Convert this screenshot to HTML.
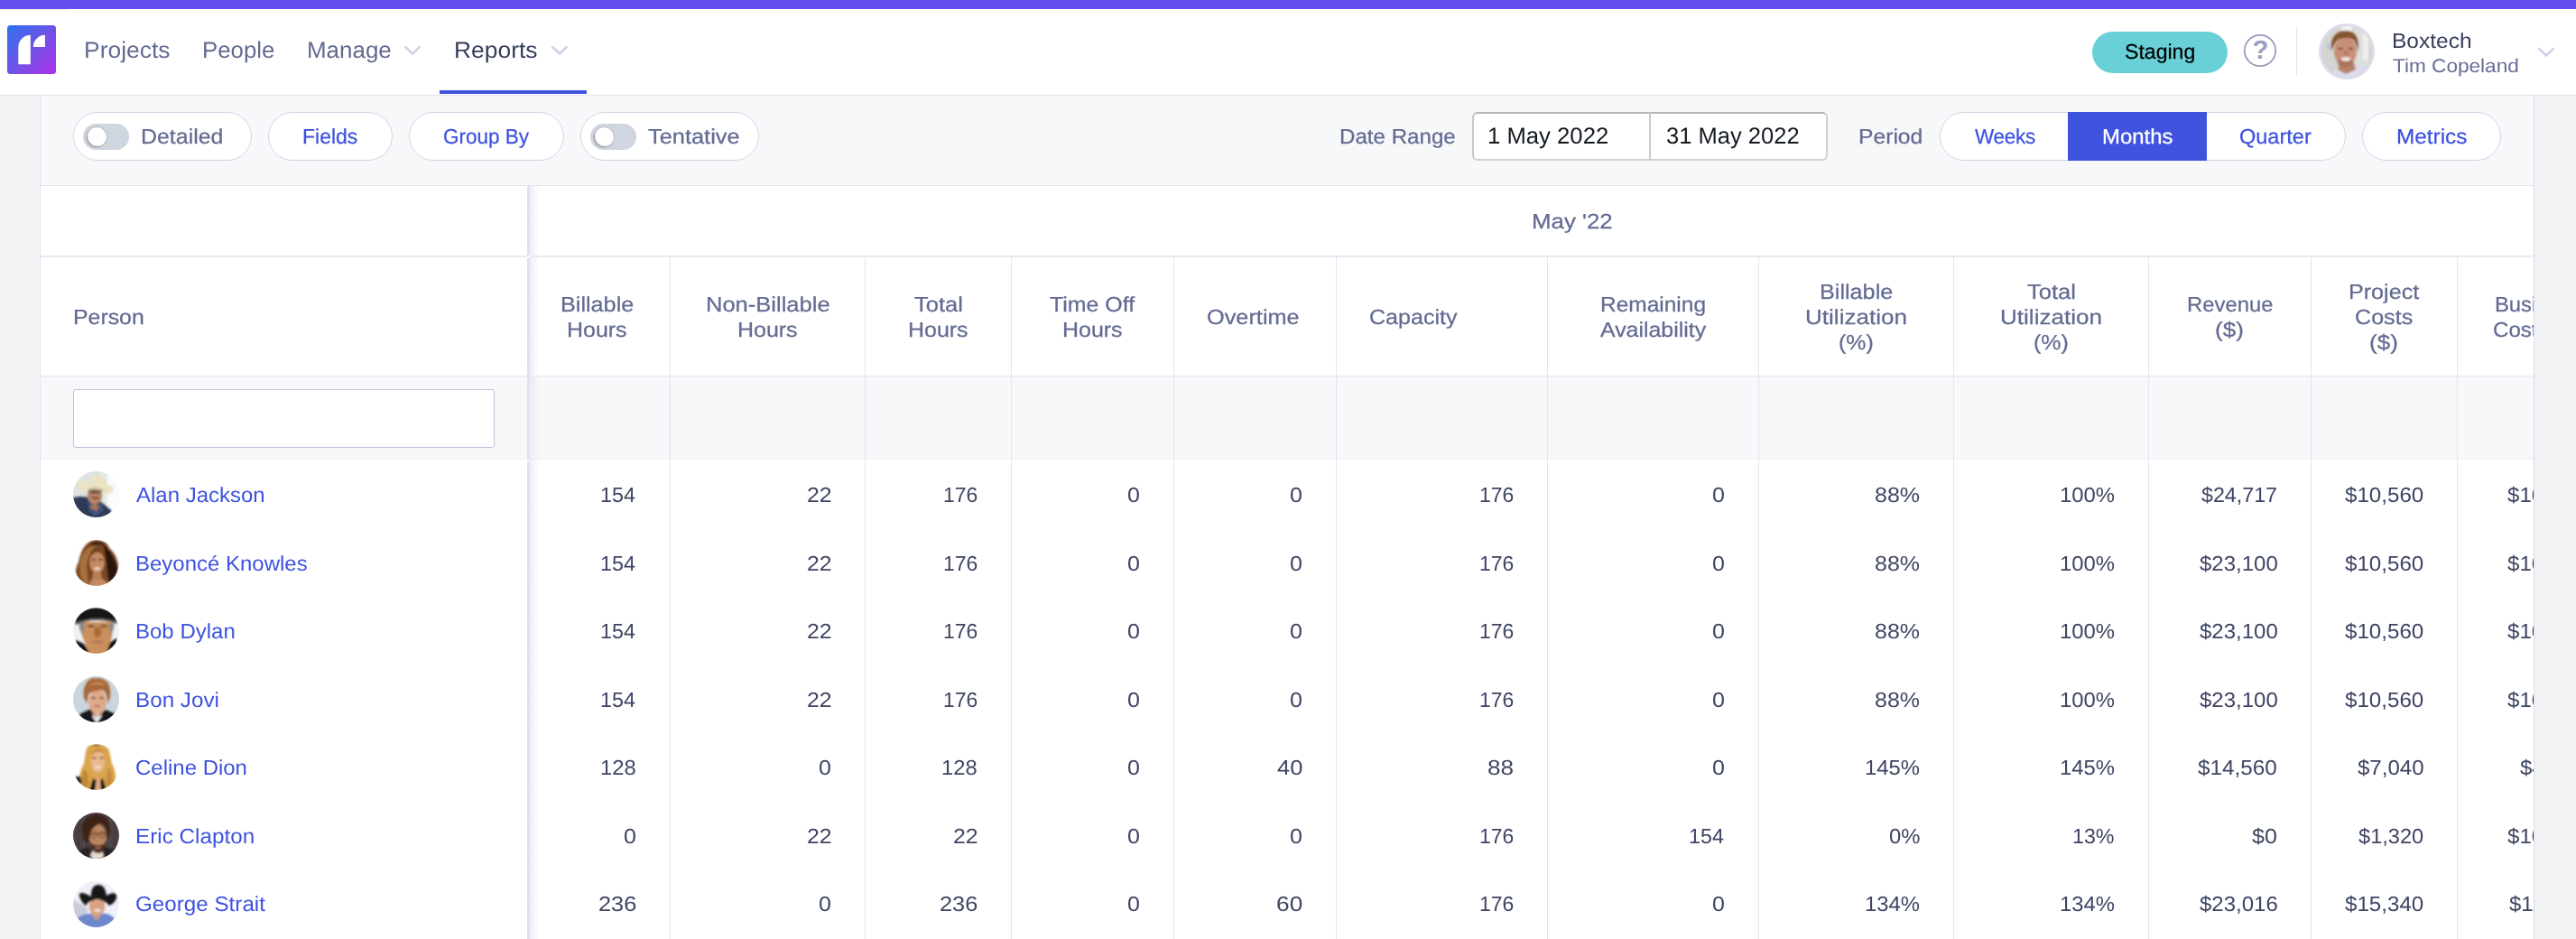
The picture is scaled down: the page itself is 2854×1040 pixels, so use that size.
<!DOCTYPE html>
<html lang="en">
<head>
<meta charset="utf-8">
<title>Reports</title>
<style>
*{box-sizing:border-box;margin:0;padding:0}
html,body{width:2854px;height:1040px;overflow:hidden;background:#f1f2f4;font-family:"Liberation Sans",sans-serif}
body{position:relative}
.abs{position:absolute}
.t{position:absolute;white-space:nowrap;line-height:1;display:block;transform-origin:0 0;text-rendering:geometricPrecision}
#topbar{left:0;top:0;width:2854px;height:10px;background:#654ff0}
#header{left:0;top:10px;width:2854px;height:96px;background:#fff;border-bottom:1px solid #e2e3ee}
#logo{left:8px;top:28px;width:54px;height:54px}
#repline{left:487px;top:100px;width:163px;height:4px;background:#4053de}
#staging{left:2318px;top:35px;width:150px;height:46px;border-radius:23px;background:#68d0d6}
#hsep{left:2544px;top:30px;width:1px;height:54px;background:#e4e5f0}
#uav{left:2569px;top:26px;width:62px;height:62px;border-radius:50%;background:#dcdcec}
#panel{left:44px;top:106px;width:2764px;height:934px;background:#fff;border-left:1px solid #e3e4ee;border-right:1px solid #dfe0ea}
#toolbar{left:45px;top:106px;width:2762px;height:100px;background:#f7f8fa;border-bottom:1px solid #e2e3ee}
.pill{position:absolute;top:124px;height:54px;border-radius:27px;background:#fff;border:1px solid #d3d5e6}
.track{position:absolute;top:137px;width:50.5px;height:29px;border-radius:15px;background:#cfd6df}
.knob{position:absolute;top:139.7px;width:24.6px;height:24.6px;border-radius:50%;background:#fff;border:1px solid rgba(125,133,138,.55);box-shadow:inset 1px -1px 1px rgba(100,108,112,.7)}
#dates{left:1631px;top:124px;width:394px;height:54px;background:#fff;border:2px solid #cfd0d3;border-top-color:#b6b7ba;border-left-color:#c6c7ca;border-radius:6px}
#datesep{left:1827px;top:125px;width:2px;height:52px;background:#c9cbcf}
#months{left:2291px;top:124px;width:154px;height:54px;background:#4053de}
.hl{position:absolute;left:45px;width:2762px;height:2px;background:#e8e9f2}
#filterrow{left:45px;top:416px;width:2762px;height:93px;background:#f7f8fa;border-top:1px solid #e6e7f0;border-bottom:1px solid #ecedf3}
#finput{left:81px;top:431px;width:467px;height:65px;background:#fff;border:1.5px solid #bfc2da;border-radius:3px}
.vl{position:absolute;top:285px;width:1px;height:755px;background:#e4e5ef}
#fixsep{left:584px;top:206px;width:3px;height:834px;background:linear-gradient(90deg,#dfe0ee 0,#dfe0ee 60%,#e8e9f3 100%)}
#fixshadow{left:587px;top:206px;width:10px;height:834px;background:linear-gradient(90deg,rgba(230,231,243,.75),rgba(240,240,248,0))}
.av{position:absolute;left:81px;width:51px;height:51px}
</style>
</head>
<body>
<div id="topbar" class="abs"></div>
<div id="header" class="abs"></div>
<div class="abs" style="left:0;top:10px;width:76px;height:1px;background:#ebecf0"></div>
<svg id="logo" class="abs" viewBox="0 0 54 54"><defs><linearGradient id="lg" x1="0" y1="0" x2="1" y2="1"><stop offset="0" stop-color="#2b72ee"/><stop offset=".5" stop-color="#6f52e6"/><stop offset="1" stop-color="#ad31e8"/></linearGradient></defs>
<rect width="54" height="54" rx="3.5" fill="url(#lg)"/>
<path d="M12.3 43.3V24.3A13.5 13.5 0 0 1 25.8 10.8V43.3Z" fill="#fff"/>
<path d="M28.8 23.9A13.1 13.1 0 0 1 41.9 10.8V23.9Z" fill="#fff"/>
</svg>
<svg class="abs" style="left:446px;top:48px" width="22" height="15" viewBox="0 0 22 15"><path d="M2.5 3.5L11 11.5L19.5 3.5" fill="none" stroke="#cfd2e4" stroke-width="2.6"/></svg>
<svg class="abs" style="left:609px;top:48px" width="22" height="15" viewBox="0 0 22 15"><path d="M2.5 3.5L11 11.5L19.5 3.5" fill="none" stroke="#cfd2e4" stroke-width="2.6"/></svg>
<div id="repline" class="abs"></div>
<div id="staging" class="abs"></div>
<svg class="abs" style="left:2485px;top:37px" width="38" height="38" viewBox="0 0 38 38"><circle cx="19" cy="19" r="17.2" fill="none" stroke="#9a9cbe" stroke-width="1.8"/></svg>
<span class="t" style="left:2495.6px;top:41.5px;font-size:29px;font-weight:700;color:#9c9ec2">?</span>
<div id="hsep" class="abs"></div>
<div id="uav" class="abs"></div>
<svg class="abs" style="left:2572px;top:29px" width="56" height="56" viewBox="0 0 56 56"><defs><clipPath id="cu"><circle cx="28" cy="28" r="28"/></clipPath><filter id="bl" x="-20%" y="-20%" width="140%" height="140%"><feGaussianBlur stdDeviation="1"/></filter></defs>
<g clip-path="url(#cu)"><rect width="56" height="56" fill="#d4d4d2"/><g filter="url(#bl)"><rect x="22" y="-2" width="12" height="10" fill="#f2f2f0"/><rect x="36" y="4" width="16" height="40" fill="#dededc"/><rect x="46" y="8" width="6" height="30" fill="#efefed"/><rect x="6" y="18" width="4" height="8" fill="#bfc8d8"/>
<path d="M10 58C12 48 18 45 24 46L34 44C44 40 52 42 58 48V58Z" fill="#dcdbea"/><path d="M20 40L36 40L38 48L27 53L18 48Z" fill="#b98268"/>
<ellipse cx="26.5" cy="28" rx="12.5" ry="16" fill="#c88f76"/><ellipse cx="26.5" cy="40" rx="8.5" ry="5" fill="#a8735c"/>
<path d="M11 27C9 12 17 5 27 5C37 5 43 12 40.5 28C39 21 37 16 34 14C28 12 22 13 18 15C15 18 13.5 22 11 27Z" fill="#85552f"/>
<ellipse cx="27" cy="36.5" rx="5.5" ry="2.2" fill="#f6ecea"/><ellipse cx="21" cy="25" rx="2.6" ry="1.1" fill="#5a3a2a"/><ellipse cx="32.500" cy="25" rx="2.6" ry="1.1" fill="#5a3a2a"/><ellipse cx="27" cy="30" rx="2.2" ry="3" fill="#b27a62"/></g></g></svg>
<svg class="abs" style="left:2810px;top:50px" width="22" height="15" viewBox="0 0 22 15"><path d="M2.5 3.5L11 11.5L19.5 3.5" fill="none" stroke="#cfd2e4" stroke-width="2.6"/></svg>

<div id="panel" class="abs"></div>
<div id="toolbar" class="abs"></div>
<div class="pill" style="left:81px;width:198px"></div><div class="track" style="left:92px"></div><div class="knob" style="left:94.5px"></div>
<div class="pill" style="left:297px;width:138px"></div>
<div class="pill" style="left:453px;width:172px"></div>
<div class="pill" style="left:643px;width:198px"></div><div class="track" style="left:654px"></div><div class="knob" style="left:656.5px"></div>
<div id="dates" class="abs"></div><div id="datesep" class="abs"></div>
<div class="pill" style="left:2149px;width:450px"></div><div id="months" class="abs"></div>
<div class="pill" style="left:2617px;width:154px"></div>

<div class="hl" style="top:283px"></div>
<div id="filterrow" class="abs"></div>
<div class="vl" style="left:742px"></div>
<div class="vl" style="left:958px"></div>
<div class="vl" style="left:1120px"></div>
<div class="vl" style="left:1300px"></div>
<div class="vl" style="left:1480px"></div>
<div class="vl" style="left:1714px"></div>
<div class="vl" style="left:1948px"></div>
<div class="vl" style="left:2164px"></div>
<div class="vl" style="left:2380px"></div>
<div class="vl" style="left:2560px"></div>
<div class="vl" style="left:2722px"></div>
<div class="abs" style="left:587px;top:206px;width:2220px;height:77px;background:#fff"></div>
<div id="fixshadow" class="abs"></div>
<div id="fixsep" class="abs"></div>
<div class="abs" style="left:584px;top:283px;width:3px;height:2px;background:#fff"></div>
<div class="abs" style="left:584px;top:509px;width:3px;height:2px;background:#fff;opacity:.7"></div>
<div id="finput" class="abs"></div>
<svg width="0" height="0" style="position:absolute"><defs><clipPath id="ca"><circle cx="25.5" cy="25.5" r="25.5"/></clipPath><filter id="b1" x="-30%" y="-30%" width="160%" height="160%"><feGaussianBlur stdDeviation="0.9"/></filter><filter id="b2" x="-30%" y="-30%" width="160%" height="160%"><feGaussianBlur stdDeviation="1.6"/></filter></defs></svg>
<svg class="av" style="top:522.20px" viewBox="0 0 51 51"><g clip-path="url(#ca)"><rect width="51" height="51" fill="#dde3de"/><rect x="37" y="0" width="14" height="51" fill="#fbfbfc"/><rect x="30" y="0" width="8" height="36" fill="#e6ebe6"/>
<g filter="url(#b1)"><path d="M-2 30C6 27 14 28 20 30L30 33L42 43L46 55H-2Z" fill="#2d3b59"/><path d="M17 33L27 38L31 34L34 43L24 50L18 44Z" fill="#41547c"/>
<ellipse cx="24" cy="27" rx="8.200" ry="9.500" fill="#b88469"/><path d="M18 40L24 35L29 39L26 44Z" fill="#a87458"/><ellipse cx="24.500" cy="29.500" rx="4" ry="1.200" fill="#6a4836"/><ellipse cx="24.500" cy="22.500" rx="7" ry="2.500" fill="#7a5440"/>
<path d="M5 14C4 10 9 9 14 11L19 14C19 8 22 4 27 4C33 4 36 8 37 16C40 15 44 15 45 18C45 22 42 25 38 25C34 21 28 19 24 19C20 19 15 21 12 23C8 21 6 18 5 14Z" fill="#ebe3c3"/><path d="M16 20C20 17 30 17 35 21L34 23C29 20 20 20 16 22Z" fill="#c9bf9c"/></g></g></svg>
<svg class="av" style="top:597.75px" viewBox="0 0 51 51"><g clip-path="url(#ca)"><rect width="51" height="51" fill="#ffffff"/>
<g filter="url(#b1)"><path d="M24 0C32 -1 38 3 40 9C45 13 49 20 50 28C51 36 48 42 44 46L40 52H10L6 44C2 38 2 32 6 25C8 15 12 2 24 0Z" fill="#7a4624"/><path d="M33 5C42 12 48 24 49 32C48 40 44 44 40 47C37 36 38 22 33 5Z" fill="#26120a"/><path d="M9 20C6 30 7 40 12 47L17 50L15 28C16 20 20 10 26 6C18 6 12 12 9 20Z" fill="#a9713f"/><path d="M20 3C26 1 32 2 36 6C30 5 25 5 20 7Z" fill="#3a1e0e"/>
<path d="M17 52C18 45 22 42 26 42C32 42 37 45 40 52Z" fill="#c48a62"/><path d="M22 36L31 36L32 44L21 44Z" fill="#b87e58"/><ellipse cx="26.500" cy="25" rx="8.300" ry="11.500" fill="#c38c66"/><ellipse cx="26.500" cy="31.800" rx="3.600" ry="1.500" fill="#f0d8cc"/><ellipse cx="22.800" cy="22" rx="2.300" ry="1" fill="#4a2a18"/><ellipse cx="30.400" cy="22" rx="2.300" ry="1" fill="#4a2a18"/><path d="M18 20C19 12 25 9 31 11C27 13 21 15 18 20Z" fill="#6a3c1e"/></g></g></svg>
<svg class="av" style="top:673.30px" viewBox="0 0 51 51"><g clip-path="url(#ca)"><rect width="51" height="51" fill="#f0f0f6"/>
<g filter="url(#b1)"><path d="M3 36L12 40L20 52H-2Z" fill="#15151a"/><path d="M48 34L40 39L34 52H53Z" fill="#15151a"/>
<path d="M10 16C8 24 9 30 12 36L18 52H36L42 36C44 28 44 22 42 16Z" fill="#c98f5c"/><path d="M7 17C6 22 8 27 11 30L13 17Z" fill="#8f8a86"/><path d="M45 17C46 22 44 27 41 30L40 17Z" fill="#8f8a86"/><ellipse cx="27" cy="27" rx="4" ry="6" fill="#a86a3a"/><ellipse cx="27" cy="38" rx="6" ry="1.800" fill="#b07858"/><ellipse cx="20" cy="20.500" rx="4" ry="1.500" fill="#7a5638"/><ellipse cx="34" cy="20.500" rx="4" ry="1.500" fill="#7a5638"/>
<path d="M2 17C4 6 14 0 25 0C37 0 46 6 49 16C40 13 34 12 26 12C18 12 10 14 2 17Z" fill="#121216"/><path d="M2 17C10 13.500 18 12 26 12C34 12 42 13.500 49 16L48 18C40 15 34 14 26 14C18 14 10 16 3 19Z" fill="#5a5652"/></g></g></svg>
<svg class="av" style="top:748.85px" viewBox="0 0 51 51"><g clip-path="url(#ca)"><rect width="51" height="51" fill="#c9d6db"/>
<g filter="url(#b1)"><path d="M7 42L20 36L26 44L36 37L47 42L44 52H10Z" fill="#17181c"/><path d="M21 44L26 52L32 44L27 41Z" fill="#e8eaee"/>
<ellipse cx="27" cy="28" rx="10" ry="13.500" fill="#dfa98a"/><path d="M20 39L27 43L33 39L31 44L24 45Z" fill="#d09876"/><ellipse cx="26.500" cy="33" rx="4" ry="1" fill="#b07060"/><ellipse cx="22.500" cy="24" rx="2.500" ry="1" fill="#6a4838"/><ellipse cx="31.500" cy="24" rx="2.500" ry="1" fill="#6a4838"/>
<path d="M12 24C10 14 14 4 22 2C24 3 30 1 34 4C40 6 42 14 41 24L38 30C38 20 36 16 31 15C26 17 20 16 17 20C16 24 16 27 15 30Z" fill="#a8683a"/><path d="M18 10C22 6 30 5 36 10C30 9 24 9 18 10Z" fill="#c88a52"/></g></g></svg>
<svg class="av" style="top:824.40px" viewBox="0 0 51 51"><g clip-path="url(#ca)"><rect width="51" height="51" fill="#ffffff"/>
<g filter="url(#b1)"><path d="M17 2C24 -1 34 0 38 4C42 10 41 18 44 24C48 32 48 40 44 46L38 52H12L8 44C5 38 8 30 11 24C14 16 13 6 17 2Z" fill="#d9a54e"/><path d="M12 28C9 36 8 42 12 48L18 46L16 32Z" fill="#c08636"/><path d="M40 26C44 34 44 42 40 48L36 44L38 32Z" fill="#c68c3c"/><path d="M2 36L8 36L10 44L6 44Z" fill="#20242c"/>
<path d="M18 52L22 38L28 42L33 38L37 52Z" fill="#17130f"/><path d="M24 52L26 38L30 38L31 52Z" fill="#e0aa82"/>
<ellipse cx="27.500" cy="20" rx="7.500" ry="12" fill="#e9ba8e"/><ellipse cx="27.500" cy="25.500" rx="3.600" ry="1.300" fill="#f6e6dc"/><ellipse cx="23.500" cy="15.500" rx="2.400" ry="1" fill="#7a5030"/><ellipse cx="31.500" cy="15.500" rx="2.400" ry="1" fill="#7a5030"/><path d="M20 12C22 4 32 3 35 10C30 8 25 8 20 12Z" fill="#c8923e"/><path d="M22 1C26 0 30 0 32 2C28 2 25 2 22 3Z" fill="#8a5a2a"/></g></g></svg>
<svg class="av" style="top:899.95px" viewBox="0 0 51 51"><g clip-path="url(#ca)"><rect width="51" height="51" fill="#4a4244"/><g opacity=".5"><rect x="5" width="2" height="51" fill="#3a3234"/><rect x="11" width="2" height="51" fill="#5a5254"/><rect x="40" width="2" height="51" fill="#5a5254"/><rect x="45" width="2" height="51" fill="#3a3234"/></g>
<g filter="url(#b1)"><path d="M2 44L16 38L26 46L36 38L48 42L46 52H4Z" fill="#2a2020"/><path d="M19 47L22 42L32 42L34 48L30 52H22Z" fill="#e8d8cc"/>
<ellipse cx="27.500" cy="27" rx="9.500" ry="14" fill="#b98460"/><path d="M19 32C20 42 24 45 28 45C32 45 35 42 36 32C33 37 30 36 27.500 36C25 36 22 37 19 32Z" fill="#4a2c1c"/><ellipse cx="27.500" cy="39" rx="3.500" ry="1.200" fill="#9a6a58"/>
<path d="M18 23.500H37" stroke="#5a3a28" stroke-width="1.200"/><circle cx="22.500" cy="24.500" r="3.600" fill="none" stroke="#6a4630" stroke-width="1"/><circle cx="32.500" cy="24.500" r="3.600" fill="none" stroke="#6a4630" stroke-width="1"/>
<path d="M10 22C8 12 14 3 24 2C32 1 40 6 41 16C42 22 40 28 38 30C38 20 36 14 30 12C26 14 22 16 19 22C18 27 18 30 17 34C12 32 10 28 10 22Z" fill="#3c2418"/></g></g></svg>
<svg class="av" style="top:975.50px" viewBox="0 0 51 51"><g clip-path="url(#ca)"><rect width="51" height="51" fill="#eef0fa"/><path d="M0 20L16 30L14 46L0 46Z" fill="#c9ccd6" filter="url(#b2)"/>
<g filter="url(#b1)"><path d="M4 42C10 36 18 35 24 37L30 36C38 35 44 38 48 44L44 54H8Z" fill="#6d88cb"/><path d="M20 36L26 44L31 36L28 34H23Z" fill="#d09878"/>
<ellipse cx="26.500" cy="28" rx="8.800" ry="11" fill="#d8a283"/><ellipse cx="27" cy="32.500" rx="3.800" ry="1.400" fill="#f4e8e2"/><path d="M18 24C20 20 33 20 36 24L35 21H19Z" fill="#8a6048"/>
<path d="M7 16C6 13 10 12 14 14L20 17C20 9 22 4 28 4C34 4 36 9 37 16C41 13 46 12 48 15C49 20 45 25 40 27C36 22 31 20 27 20C22 20 17 22 14 27C10 24 8 20 7 16Z" fill="#121214"/></g></g></svg>
<span class="t" style="left:93.42px;top:44px;font-size:25.4px;transform:scaleX(1.0424);color:#626a90;">Projects</span>
<span class="t" style="left:224.37px;top:44px;font-size:25.4px;transform:scaleX(1.0166);color:#626a90;">People</span>
<span class="t" style="left:339.56px;top:44px;font-size:25.4px;transform:scaleX(1.0221);color:#626a90;">Manage</span>
<span class="t" style="left:503.32px;top:44px;font-size:25.4px;transform:scaleX(1.0405);color:#363d5c;">Reports</span>
<span class="t" style="left:2353.80px;top:46px;font-size:23.2px;transform:scaleX(0.9953);color:#000;-webkit-text-stroke:0.25px currentColor;">Staging</span>
<span class="t" style="left:2649.94px;top:34px;font-size:23.2px;transform:scaleX(1.0574);color:#363d5c;">Boxtech</span>
<span class="t" style="left:2651.00px;top:63px;font-size:21.1px;transform:scaleX(1.0709);color:#666d94;">Tim Copeland</span>
<span class="t" style="left:155.63px;top:140px;font-size:23.2px;transform:scaleX(1.0747);color:#636b92;-webkit-text-stroke:0.25px currentColor;">Detailed</span>
<span class="t" style="left:335.31px;top:140px;font-size:23.2px;transform:scaleX(0.9906);color:#3d52e0;-webkit-text-stroke:0.25px currentColor;">Fields</span>
<span class="t" style="left:490.73px;top:140px;font-size:23.2px;transform:scaleX(0.9706);color:#3d52e0;-webkit-text-stroke:0.25px currentColor;">Group By</span>
<span class="t" style="left:718.00px;top:140px;font-size:23.2px;transform:scaleX(1.0945);color:#636b92;-webkit-text-stroke:0.25px currentColor;">Tentative</span>
<span class="t" style="left:1483.96px;top:140px;font-size:23.2px;transform:scaleX(1.0406);color:#636b92;-webkit-text-stroke:0.25px currentColor;">Date Range</span>
<span class="t" style="left:1648.19px;top:139px;font-size:25.4px;transform:scaleX(1.0117);color:#131920;">1 May 2022</span>
<span class="t" style="left:1846.30px;top:139px;font-size:25.4px;transform:scaleX(1.0055);color:#131920;">31 May 2022</span>
<span class="t" style="left:2059.34px;top:140px;font-size:23.2px;transform:scaleX(1.0639);color:#636b92;-webkit-text-stroke:0.25px currentColor;">Period</span>
<span class="t" style="left:2188.10px;top:140px;font-size:23.2px;letter-spacing:-0.274px;transform:scaleX(0.9700);color:#3d52e0;-webkit-text-stroke:0.25px currentColor;">Weeks</span>
<span class="t" style="left:2328.97px;top:140px;font-size:23.2px;transform:scaleX(1.0315);color:#fff;-webkit-text-stroke:0.25px currentColor;">Months</span>
<span class="t" style="left:2480.69px;top:140px;font-size:23.2px;transform:scaleX(1.0143);color:#3d52e0;-webkit-text-stroke:0.25px currentColor;">Quarter</span>
<span class="t" style="left:2654.75px;top:140px;font-size:23.2px;transform:scaleX(1.0503);color:#3d52e0;-webkit-text-stroke:0.25px currentColor;">Metrics</span>
<span class="t" style="left:1697.49px;top:234px;font-size:23.2px;transform:scaleX(1.1149);color:#636b92;-webkit-text-stroke:0.25px currentColor;">May '22</span>
<span class="t" style="left:80.53px;top:340px;font-size:23.2px;transform:scaleX(1.0716);color:#636b92;-webkit-text-stroke:0.25px currentColor;">Person</span>
<span class="t" style="left:621.01px;top:326px;font-size:23.2px;transform:scaleX(1.0869);color:#636b92;-webkit-text-stroke:0.25px currentColor;">Billable</span>
<span class="t" style="left:628.17px;top:354px;font-size:23.2px;transform:scaleX(1.0769);color:#636b92;-webkit-text-stroke:0.25px currentColor;">Hours</span>
<span class="t" style="left:781.65px;top:326px;font-size:23.2px;transform:scaleX(1.1004);color:#636b92;-webkit-text-stroke:0.25px currentColor;">Non-Billable</span>
<span class="t" style="left:816.97px;top:354px;font-size:23.2px;transform:scaleX(1.0769);color:#636b92;-webkit-text-stroke:0.25px currentColor;">Hours</span>
<span class="t" style="left:1013.15px;top:326px;font-size:23.2px;transform:scaleX(1.1018);color:#636b92;-webkit-text-stroke:0.25px currentColor;">Total</span>
<span class="t" style="left:1005.97px;top:354px;font-size:23.2px;transform:scaleX(1.0769);color:#636b92;-webkit-text-stroke:0.25px currentColor;">Hours</span>
<span class="t" style="left:1163.15px;top:326px;font-size:23.2px;transform:scaleX(1.0741);color:#636b92;-webkit-text-stroke:0.25px currentColor;">Time Off</span>
<span class="t" style="left:1176.97px;top:354px;font-size:23.2px;transform:scaleX(1.0769);color:#636b92;-webkit-text-stroke:0.25px currentColor;">Hours</span>
<span class="t" style="left:1337.21px;top:340px;font-size:23.2px;transform:scaleX(1.0915);color:#636b92;-webkit-text-stroke:0.25px currentColor;">Overtime</span>
<span class="t" style="left:1516.92px;top:340px;font-size:23.2px;transform:scaleX(1.0823);color:#636b92;-webkit-text-stroke:0.25px currentColor;">Capacity</span>
<span class="t" style="left:1772.94px;top:326px;font-size:23.2px;transform:scaleX(1.0555);color:#636b92;-webkit-text-stroke:0.25px currentColor;">Remaining</span>
<span class="t" style="left:1772.70px;top:354px;font-size:23.2px;transform:scaleX(1.0737);color:#636b92;-webkit-text-stroke:0.25px currentColor;">Availability</span>
<span class="t" style="left:2015.81px;top:312px;font-size:23.2px;transform:scaleX(1.0869);color:#636b92;-webkit-text-stroke:0.25px currentColor;">Billable</span>
<span class="t" style="left:1999.93px;top:340px;font-size:23.2px;transform:scaleX(1.1243);color:#636b92;-webkit-text-stroke:0.25px currentColor;">Utilization</span>
<span class="t" style="left:2036.92px;top:368px;font-size:23.2px;transform:scaleX(1.0774);color:#636b92;-webkit-text-stroke:0.25px currentColor;">(%)</span>
<span class="t" style="left:2246.15px;top:312px;font-size:23.2px;transform:scaleX(1.1018);color:#636b92;-webkit-text-stroke:0.25px currentColor;">Total</span>
<span class="t" style="left:2215.93px;top:340px;font-size:23.2px;transform:scaleX(1.1243);color:#636b92;-webkit-text-stroke:0.25px currentColor;">Utilization</span>
<span class="t" style="left:2252.92px;top:368px;font-size:23.2px;transform:scaleX(1.0774);color:#636b92;-webkit-text-stroke:0.25px currentColor;">(%)</span>
<span class="t" style="left:2422.72px;top:326px;font-size:23.2px;transform:scaleX(1.0282);color:#636b92;-webkit-text-stroke:0.25px currentColor;">Revenue</span>
<span class="t" style="left:2454.43px;top:354px;font-size:23.2px;transform:scaleX(1.1231);color:#636b92;-webkit-text-stroke:0.25px currentColor;">($)</span>
<span class="t" style="left:2601.57px;top:312px;font-size:23.2px;transform:scaleX(1.0832);color:#636b92;-webkit-text-stroke:0.25px currentColor;">Project</span>
<span class="t" style="left:2609.17px;top:340px;font-size:23.2px;transform:scaleX(1.0834);color:#636b92;-webkit-text-stroke:0.25px currentColor;">Costs</span>
<span class="t" style="left:2625.43px;top:368px;font-size:23.2px;transform:scaleX(1.1231);color:#636b92;-webkit-text-stroke:0.25px currentColor;">($)</span>
<span class="t" style="left:2763.68px;top:326px;font-size:23.2px;transform:scaleX(1.0241);color:#636b92;-webkit-text-stroke:0.25px currentColor;">Business</span>
<span class="t" style="left:2761.76px;top:354px;font-size:23.2px;transform:scaleX(1.0389);color:#636b92;-webkit-text-stroke:0.25px currentColor;">Costs ($)</span>
<span class="t" style="left:150.80px;top:537px;font-size:23.2px;transform:scaleX(1.0341);color:#3d52e0;">Alan Jackson</span>
<span class="t" style="left:665.29px;top:537px;font-size:23.2px;transform:scaleX(1.0055);color:#3f4564;">154</span>
<span class="t" style="left:893.63px;top:537px;font-size:23.2px;transform:scaleX(1.0711);color:#3f4564;">22</span>
<span class="t" style="left:1044.91px;top:537px;font-size:23.2px;transform:scaleX(0.9894);color:#3f4564;">176</span>
<span class="t" style="left:1249.33px;top:537px;font-size:23.2px;transform:scaleX(1.0800);color:#3f4564;">0</span>
<span class="t" style="left:1429.33px;top:537px;font-size:23.2px;transform:scaleX(1.0800);color:#3f4564;">0</span>
<span class="t" style="left:1638.91px;top:537px;font-size:23.2px;transform:scaleX(0.9894);color:#3f4564;">176</span>
<span class="t" style="left:1897.33px;top:537px;font-size:23.2px;transform:scaleX(1.0800);color:#3f4564;">0</span>
<span class="t" style="left:2076.92px;top:537px;font-size:23.2px;transform:scaleX(1.0780);color:#3f4564;">88%</span>
<span class="t" style="left:2281.87px;top:537px;font-size:23.2px;transform:scaleX(1.0296);color:#3f4564;">100%</span>
<span class="t" style="left:2439.20px;top:537px;font-size:23.2px;transform:scaleX(1.0020);color:#3f4564;">$24,717</span>
<span class="t" style="left:2598.00px;top:537px;font-size:23.2px;transform:scaleX(1.0406);color:#3f4564;">$10,560</span>
<span class="t" style="left:2778.00px;top:537px;font-size:23.2px;transform:scaleX(1.0406);color:#3f4564;">$10,560</span>
<span class="t" style="left:150.07px;top:613px;font-size:23.2px;transform:scaleX(1.0343);color:#3d52e0;">Beyoncé Knowles</span>
<span class="t" style="left:665.29px;top:613px;font-size:23.2px;transform:scaleX(1.0055);color:#3f4564;">154</span>
<span class="t" style="left:893.63px;top:613px;font-size:23.2px;transform:scaleX(1.0711);color:#3f4564;">22</span>
<span class="t" style="left:1044.91px;top:613px;font-size:23.2px;transform:scaleX(0.9894);color:#3f4564;">176</span>
<span class="t" style="left:1249.33px;top:613px;font-size:23.2px;transform:scaleX(1.0800);color:#3f4564;">0</span>
<span class="t" style="left:1429.33px;top:613px;font-size:23.2px;transform:scaleX(1.0800);color:#3f4564;">0</span>
<span class="t" style="left:1638.91px;top:613px;font-size:23.2px;transform:scaleX(0.9894);color:#3f4564;">176</span>
<span class="t" style="left:1897.33px;top:613px;font-size:23.2px;transform:scaleX(1.0800);color:#3f4564;">0</span>
<span class="t" style="left:2076.92px;top:613px;font-size:23.2px;transform:scaleX(1.0780);color:#3f4564;">88%</span>
<span class="t" style="left:2281.87px;top:613px;font-size:23.2px;transform:scaleX(1.0296);color:#3f4564;">100%</span>
<span class="t" style="left:2436.50px;top:613px;font-size:23.2px;transform:scaleX(1.0346);color:#3f4564;">$23,100</span>
<span class="t" style="left:2598.00px;top:613px;font-size:23.2px;transform:scaleX(1.0406);color:#3f4564;">$10,560</span>
<span class="t" style="left:2778.00px;top:613px;font-size:23.2px;transform:scaleX(1.0406);color:#3f4564;">$10,560</span>
<span class="t" style="left:150.16px;top:688px;font-size:23.2px;transform:scaleX(1.0353);color:#3d52e0;">Bob Dylan</span>
<span class="t" style="left:665.29px;top:688px;font-size:23.2px;transform:scaleX(1.0055);color:#3f4564;">154</span>
<span class="t" style="left:893.63px;top:688px;font-size:23.2px;transform:scaleX(1.0711);color:#3f4564;">22</span>
<span class="t" style="left:1044.91px;top:688px;font-size:23.2px;transform:scaleX(0.9894);color:#3f4564;">176</span>
<span class="t" style="left:1249.33px;top:688px;font-size:23.2px;transform:scaleX(1.0800);color:#3f4564;">0</span>
<span class="t" style="left:1429.33px;top:688px;font-size:23.2px;transform:scaleX(1.0800);color:#3f4564;">0</span>
<span class="t" style="left:1638.91px;top:688px;font-size:23.2px;transform:scaleX(0.9894);color:#3f4564;">176</span>
<span class="t" style="left:1897.33px;top:688px;font-size:23.2px;transform:scaleX(1.0800);color:#3f4564;">0</span>
<span class="t" style="left:2076.92px;top:688px;font-size:23.2px;transform:scaleX(1.0780);color:#3f4564;">88%</span>
<span class="t" style="left:2281.87px;top:688px;font-size:23.2px;transform:scaleX(1.0296);color:#3f4564;">100%</span>
<span class="t" style="left:2436.50px;top:688px;font-size:23.2px;transform:scaleX(1.0346);color:#3f4564;">$23,100</span>
<span class="t" style="left:2598.00px;top:688px;font-size:23.2px;transform:scaleX(1.0406);color:#3f4564;">$10,560</span>
<span class="t" style="left:2778.00px;top:688px;font-size:23.2px;transform:scaleX(1.0406);color:#3f4564;">$10,560</span>
<span class="t" style="left:150.15px;top:764px;font-size:23.2px;transform:scaleX(1.0451);color:#3d52e0;">Bon Jovi</span>
<span class="t" style="left:665.29px;top:764px;font-size:23.2px;transform:scaleX(1.0055);color:#3f4564;">154</span>
<span class="t" style="left:893.63px;top:764px;font-size:23.2px;transform:scaleX(1.0711);color:#3f4564;">22</span>
<span class="t" style="left:1044.91px;top:764px;font-size:23.2px;transform:scaleX(0.9894);color:#3f4564;">176</span>
<span class="t" style="left:1249.33px;top:764px;font-size:23.2px;transform:scaleX(1.0800);color:#3f4564;">0</span>
<span class="t" style="left:1429.33px;top:764px;font-size:23.2px;transform:scaleX(1.0800);color:#3f4564;">0</span>
<span class="t" style="left:1638.91px;top:764px;font-size:23.2px;transform:scaleX(0.9894);color:#3f4564;">176</span>
<span class="t" style="left:1897.33px;top:764px;font-size:23.2px;transform:scaleX(1.0800);color:#3f4564;">0</span>
<span class="t" style="left:2076.92px;top:764px;font-size:23.2px;transform:scaleX(1.0780);color:#3f4564;">88%</span>
<span class="t" style="left:2281.87px;top:764px;font-size:23.2px;transform:scaleX(1.0296);color:#3f4564;">100%</span>
<span class="t" style="left:2436.50px;top:764px;font-size:23.2px;transform:scaleX(1.0346);color:#3f4564;">$23,100</span>
<span class="t" style="left:2598.00px;top:764px;font-size:23.2px;transform:scaleX(1.0406);color:#3f4564;">$10,560</span>
<span class="t" style="left:2778.00px;top:764px;font-size:23.2px;transform:scaleX(1.0406);color:#3f4564;">$10,560</span>
<span class="t" style="left:149.77px;top:839px;font-size:23.2px;transform:scaleX(1.0341);color:#3d52e0;">Celine Dion</span>
<span class="t" style="left:665.47px;top:839px;font-size:23.2px;transform:scaleX(1.0274);color:#3f4564;">128</span>
<span class="t" style="left:907.33px;top:839px;font-size:23.2px;transform:scaleX(1.0800);color:#3f4564;">0</span>
<span class="t" style="left:1043.47px;top:839px;font-size:23.2px;transform:scaleX(1.0274);color:#3f4564;">128</span>
<span class="t" style="left:1249.33px;top:839px;font-size:23.2px;transform:scaleX(1.0800);color:#3f4564;">0</span>
<span class="t" style="left:1414.90px;top:839px;font-size:23.2px;transform:scaleX(1.1004);color:#3f4564;">40</span>
<span class="t" style="left:1648.17px;top:839px;font-size:23.2px;transform:scaleX(1.1297);color:#3f4564;">88</span>
<span class="t" style="left:1897.33px;top:839px;font-size:23.2px;transform:scaleX(1.0800);color:#3f4564;">0</span>
<span class="t" style="left:2065.87px;top:839px;font-size:23.2px;transform:scaleX(1.0296);color:#3f4564;">145%</span>
<span class="t" style="left:2281.87px;top:839px;font-size:23.2px;transform:scaleX(1.0296);color:#3f4564;">145%</span>
<span class="t" style="left:2435.40px;top:839px;font-size:23.2px;transform:scaleX(1.0478);color:#3f4564;">$14,560</span>
<span class="t" style="left:2611.70px;top:839px;font-size:23.2px;transform:scaleX(1.0368);color:#3f4564;">$7,040</span>
<span class="t" style="left:2791.70px;top:839px;font-size:23.2px;transform:scaleX(1.0368);color:#3f4564;">$4,400</span>
<span class="t" style="left:150.15px;top:915px;font-size:23.2px;transform:scaleX(1.0465);color:#3d52e0;">Eric Clapton</span>
<span class="t" style="left:691.33px;top:915px;font-size:23.2px;transform:scaleX(1.0800);color:#3f4564;">0</span>
<span class="t" style="left:893.63px;top:915px;font-size:23.2px;transform:scaleX(1.0711);color:#3f4564;">22</span>
<span class="t" style="left:1055.63px;top:915px;font-size:23.2px;transform:scaleX(1.0711);color:#3f4564;">22</span>
<span class="t" style="left:1249.33px;top:915px;font-size:23.2px;transform:scaleX(1.0800);color:#3f4564;">0</span>
<span class="t" style="left:1429.33px;top:915px;font-size:23.2px;transform:scaleX(1.0800);color:#3f4564;">0</span>
<span class="t" style="left:1638.91px;top:915px;font-size:23.2px;transform:scaleX(0.9894);color:#3f4564;">176</span>
<span class="t" style="left:1871.29px;top:915px;font-size:23.2px;transform:scaleX(1.0055);color:#3f4564;">154</span>
<span class="t" style="left:2092.50px;top:915px;font-size:23.2px;transform:scaleX(1.0274);color:#3f4564;">0%</span>
<span class="t" style="left:2296.40px;top:915px;font-size:23.2px;transform:scaleX(1.0021);color:#3f4564;">13%</span>
<span class="t" style="left:2495.40px;top:915px;font-size:23.2px;transform:scaleX(1.0803);color:#3f4564;">$0</span>
<span class="t" style="left:2613.00px;top:915px;font-size:23.2px;transform:scaleX(1.0182);color:#3f4564;">$1,320</span>
<span class="t" style="left:2778.00px;top:915px;font-size:23.2px;transform:scaleX(1.0406);color:#3f4564;">$10,560</span>
<span class="t" style="left:149.66px;top:990px;font-size:23.2px;transform:scaleX(1.0439);color:#3d52e0;">George Strait</span>
<span class="t" style="left:663.01px;top:990px;font-size:23.2px;transform:scaleX(1.0926);color:#3f4564;">236</span>
<span class="t" style="left:907.33px;top:990px;font-size:23.2px;transform:scaleX(1.0800);color:#3f4564;">0</span>
<span class="t" style="left:1041.01px;top:990px;font-size:23.2px;transform:scaleX(1.0926);color:#3f4564;">236</span>
<span class="t" style="left:1249.33px;top:990px;font-size:23.2px;transform:scaleX(1.0800);color:#3f4564;">0</span>
<span class="t" style="left:1413.97px;top:990px;font-size:23.2px;letter-spacing:0.170px;transform:scaleX(1.1300);color:#3f4564;">60</span>
<span class="t" style="left:1638.91px;top:990px;font-size:23.2px;transform:scaleX(0.9894);color:#3f4564;">176</span>
<span class="t" style="left:1897.33px;top:990px;font-size:23.2px;transform:scaleX(1.0800);color:#3f4564;">0</span>
<span class="t" style="left:2065.87px;top:990px;font-size:23.2px;transform:scaleX(1.0296);color:#3f4564;">134%</span>
<span class="t" style="left:2281.87px;top:990px;font-size:23.2px;transform:scaleX(1.0296);color:#3f4564;">134%</span>
<span class="t" style="left:2436.50px;top:990px;font-size:23.2px;transform:scaleX(1.0346);color:#3f4564;">$23,016</span>
<span class="t" style="left:2598.00px;top:990px;font-size:23.2px;transform:scaleX(1.0406);color:#3f4564;">$15,340</span>
<span class="t" style="left:2780.30px;top:990px;font-size:23.2px;transform:scaleX(1.0343);color:#3f4564;">$11,800</span>
<div class="abs" style="left:2807px;top:106px;width:47px;height:934px;background:#f1f2f4;border-left:1px solid #dcdde9"></div>
</body>
</html>
